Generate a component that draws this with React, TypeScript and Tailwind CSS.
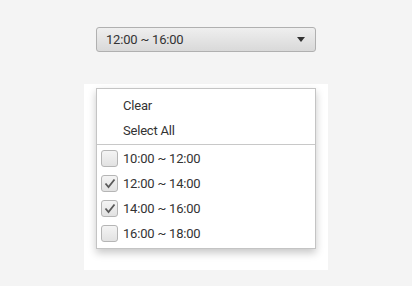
import React from "react";

const slots = [
  { label: "10:00 ~ 12:00", checked: false },
  { label: "12:00 ~ 14:00", checked: true },
  { label: "14:00 ~ 16:00", checked: true },
  { label: "16:00 ~ 18:00", checked: false },
];

function CheckBox({ checked }: { checked: boolean }) {
  return (
    <div className="w-[17px] h-[17px] rounded-[3px] border border-[#b5b5b5] bg-gradient-to-b from-[#f4f4f4] to-[#e2e2e2] flex items-center justify-center shrink-0">
      {checked && (
        <svg width="12" height="11" viewBox="0 0 12 11">
          <path d="M1.5 5.5 L4.5 9 L10.5 1.5" fill="none" stroke="#5a5a5a" strokeWidth="1.8" strokeLinejoin="miter" />
        </svg>
      )}
    </div>
  );
}

export default function App() {
  return (
    <div
      className="w-[412px] h-[286px] bg-[#f4f4f4] flex flex-col items-center text-[13px] text-[#333] tracking-[-0.2px]"
      style={{ fontFamily: 'Roboto, "Noto Sans", sans-serif' }}
    >
      {/* Combo box */}
      <div className="mt-[27px] w-[220px] h-[25px] rounded-[3px] border border-[#b0b0b0] bg-gradient-to-b from-[#efefef] to-[#d9d9d9] flex items-center pl-[9px] pr-[10px]">
        <span className="flex-1">12:00 ~ 16:00</span>
        <svg width="8" height="5" viewBox="0 0 8 5">
          <path d="M0 0 H8 L4 5 Z" fill="#333" />
        </svg>
      </div>

      {/* Popup area */}
      <div className="mt-[32px] w-[244px] h-[186px] bg-white pt-[4px] pl-[12px]">
        <div className="w-[220px] border border-[#c4c4c4] bg-white shadow-[0_4px_8px_rgba(0,0,0,0.22)] pt-[4px] pb-[2px]">
          <div className="h-[25px] flex items-center pl-[26px]">Clear</div>
          <div className="h-[25px] flex items-center pl-[26px]">Select All</div>
          <div className="my-[1px] h-px bg-[#c8c8c8]" />
          {slots.map((s) => (
            <div key={s.label} className="h-[25px] flex items-center pl-[4px] gap-[5px]">
              <CheckBox checked={s.checked} />
              <span>{s.label}</span>
            </div>
          ))}
        </div>
      </div>
    </div>
  );
}
